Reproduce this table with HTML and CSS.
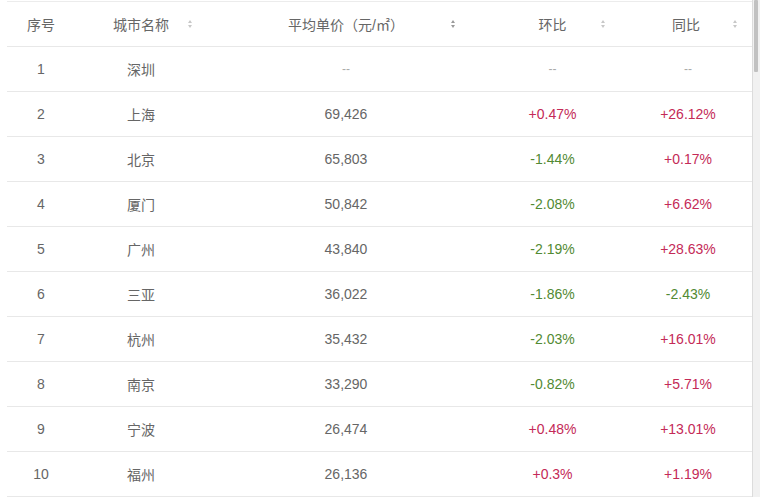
FILE: index.html
```html
<!DOCTYPE html>
<html lang="zh-CN">
<head>
<meta charset="utf-8">
<title>城市房价排行</title>
<link rel="stylesheet" href="styles.css">
</head>
<body>
<div class="page">
  <div class="table">
    <div class="row head">
      <div class="cell c1"><span class="label">序号</span></div>
      <div class="cell c2 sortable"><span class="label">城市名称</span><span class="sort"></span></div>
      <div class="cell c3 sortable wide-pad"><span class="label">平均单价（元/㎡）</span><span class="sort active"></span></div>
      <div class="cell c4 sortable"><span class="label">环比</span><span class="sort"></span></div>
      <div class="cell c5 sortable"><span class="label">同比</span><span class="sort"></span></div>
    </div>
    <div class="row"><div class="cell c1">1</div><div class="cell c2">深圳</div><div class="cell c3 dash">--</div><div class="cell c4 dash">--</div><div class="cell c5 dash">--</div></div>
    <div class="row"><div class="cell c1">2</div><div class="cell c2">上海</div><div class="cell c3">69,426</div><div class="cell c4 up">+0.47%</div><div class="cell c5 up">+26.12%</div></div>
    <div class="row"><div class="cell c1">3</div><div class="cell c2">北京</div><div class="cell c3">65,803</div><div class="cell c4 down">-1.44%</div><div class="cell c5 up">+0.17%</div></div>
    <div class="row"><div class="cell c1">4</div><div class="cell c2">厦门</div><div class="cell c3">50,842</div><div class="cell c4 down">-2.08%</div><div class="cell c5 up">+6.62%</div></div>
    <div class="row"><div class="cell c1">5</div><div class="cell c2">广州</div><div class="cell c3">43,840</div><div class="cell c4 down">-2.19%</div><div class="cell c5 up">+28.63%</div></div>
    <div class="row"><div class="cell c1">6</div><div class="cell c2">三亚</div><div class="cell c3">36,022</div><div class="cell c4 down">-1.86%</div><div class="cell c5 down">-2.43%</div></div>
    <div class="row"><div class="cell c1">7</div><div class="cell c2">杭州</div><div class="cell c3">35,432</div><div class="cell c4 down">-2.03%</div><div class="cell c5 up">+16.01%</div></div>
    <div class="row"><div class="cell c1">8</div><div class="cell c2">南京</div><div class="cell c3">33,290</div><div class="cell c4 down">-0.82%</div><div class="cell c5 up">+5.71%</div></div>
    <div class="row"><div class="cell c1">9</div><div class="cell c2">宁波</div><div class="cell c3">26,474</div><div class="cell c4 up">+0.48%</div><div class="cell c5 up">+13.01%</div></div>
    <div class="row"><div class="cell c1">10</div><div class="cell c2">福州</div><div class="cell c3">26,136</div><div class="cell c4 up">+0.3%</div><div class="cell c5 up">+1.19%</div></div>
  </div>
  <div class="scrollbar"><div class="thumb"></div></div>
</div>
</body>
</html>
```
FILE: styles.css
```css
html, body {
  margin: 0;
  padding: 0;
  background: #fff;
  overflow: hidden;
}
body {
  font-family: "Liberation Sans", "Noto Sans CJK SC", sans-serif;
  font-size: 14px;
  color: #666;
}
.page {
  display: flex;
  height: 497px;
}
.table {
  flex: 1;
  margin-left: 7px;
  margin-top: 1px;
  border-top: 1px solid #ececec;
}
.row {
  display: grid;
  grid-template-columns: 68px 132px 278px 135px 1fr;
  height: 44px;
  border-bottom: 1px solid #e8e8e8;
}
.cell {
  display: flex;
  align-items: center;
  justify-content: center;
  white-space: nowrap;
}
.head .cell {
  color: #666;
}
.head .sortable {
  display: grid;
  grid-template-columns: 1fr auto 1fr;
  align-items: center;
  padding-right: 14px;
  padding-left: 14px;
}
.head .sortable .label {
  grid-column: 2;
}
.head .sortable .sort {
  grid-column: 3;
  justify-self: end;
}
.head .wide-pad {
  padding-right: 29px;
  padding-left: 29px;
}
.sort {
  display: flex;
  flex-direction: column;
  gap: 2px;
  width: 5px;
}
.sort::before,
.sort::after {
  content: "";
  display: block;
  width: 0;
  height: 0;
  border-left: 2.5px solid transparent;
  border-right: 2.5px solid transparent;
}
.sort::before {
  border-bottom: 3px solid #c8c8c8;
}
.sort::after {
  border-top: 3px solid #c8c8c8;
}
.sort.active::before {
  border-bottom-color: #9a9a9a;
}
.sort.active::after {
  border-top-color: #9a9a9a;
}
.c5 {
  padding-left: 4px;
}
.dash {
  color: #aaa;
  font-size: 12px;
}
.up {
  color: #c42a57;
}
.down {
  color: #528a33;
}
.scrollbar {
  width: 7px;
  background: #f1f1f1;
  border-left: 1px solid #dcdcdc;
  padding: 0 2px 0 1px;
  box-sizing: border-box;
  width: 8px;
}
.thumb {
  height: 72px;
  background: #c1c1c1;
  border-radius: 1px;
}
```
